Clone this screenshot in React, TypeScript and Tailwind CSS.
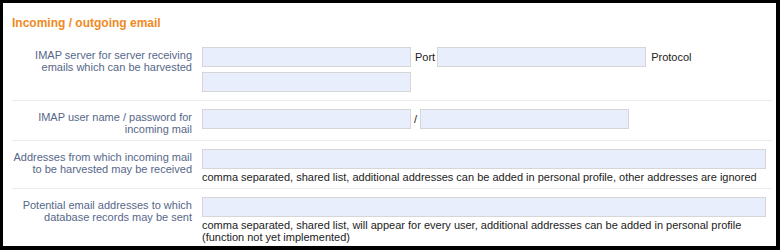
import React from 'react';

const font = { fontFamily: '"Liberation Sans", Arial, Helvetica, sans-serif' };

function Field({ className = '' }: { className?: string }) {
  return <input type="text" className={`h-[20px] bg-[#e8eefb] border border-[#d6d6d6] outline-none ${className}`} />;
}

function Label({ children }: { children: React.ReactNode }) {
  return (
    <div className="w-[180px] shrink-0 pt-[2px] text-right text-[11px] leading-[12px] text-[#56678a]">
      {children}
    </div>
  );
}

export default function App() {
  return (
    <div className="w-[780px] h-[250px] bg-black pt-[3px] pl-[3px] pr-[4px] pb-[4px]" style={font}>
      <div className="h-full bg-white pl-[9px] pr-[4px]">
        {/* Section title */}
        <div className="pt-[12px] pb-[8px] text-[12px] leading-[16px] font-bold text-[#ef8a1f]">
          Incoming / outgoing email
        </div>

        {/* IMAP server */}
        <div className="flex gap-[10px] pt-[8px] pb-[8px] border-b border-[#ececec]">
          <Label>
            IMAP server for server receiving
            <br />
            emails which can be harvested
          </Label>
          <div className="flex flex-col gap-[5px]">
            <div className="flex items-center text-[11px] text-[#222]">
              <Field className="w-[209px]" />
              <span className="ml-[4px] mr-[2px]">Port</span>
              <Field className="w-[209px]" />
              <span className="ml-[5px]">Protocol</span>
            </div>
            <Field className="w-[209px]" />
          </div>
        </div>

        {/* IMAP user */}
        <div className="flex gap-[10px] pt-[8px] pb-[5px] border-b border-[#ececec]">
          <Label>
            IMAP user name / password for
            <br />
            incoming mail
          </Label>
          <div className="flex items-start text-[11px] text-[#222]">
            <Field className="w-[209px]" />
            <span className="px-[3px] leading-[20px]">/</span>
            <Field className="w-[209px]" />
          </div>
        </div>

        {/* Harvest addresses */}
        <div className="flex gap-[10px] pt-[8px] pb-[5px] pr-[6px] border-b border-[#ececec]">
          <Label>
            Addresses from which incoming mail
            <br />
            to be harvested may be received
          </Label>
          <div className="flex-1 flex flex-col">
            <Field className="w-full" />
            <div className="mt-[2px] text-[11px] leading-[12px] text-[#222]">
              comma separated, shared list, additional addresses can be added in personal profile, other addresses are ignored
            </div>
          </div>
        </div>

        {/* Outgoing */}
        <div className="flex gap-[10px] pt-[8px] pr-[6px]">
          <Label>
            Potential email addresses to which
            <br />
            database records may be sent
          </Label>
          <div className="flex-1 flex flex-col">
            <Field className="w-full" />
            <div className="mt-[2px] text-[11px] leading-[12px] text-[#222]">
              comma separated, shared list, will appear for every user, additional addresses can be added in personal profile
              <br />
              (function not yet implemented)
            </div>
          </div>
        </div>
      </div>
    </div>
  );
}
